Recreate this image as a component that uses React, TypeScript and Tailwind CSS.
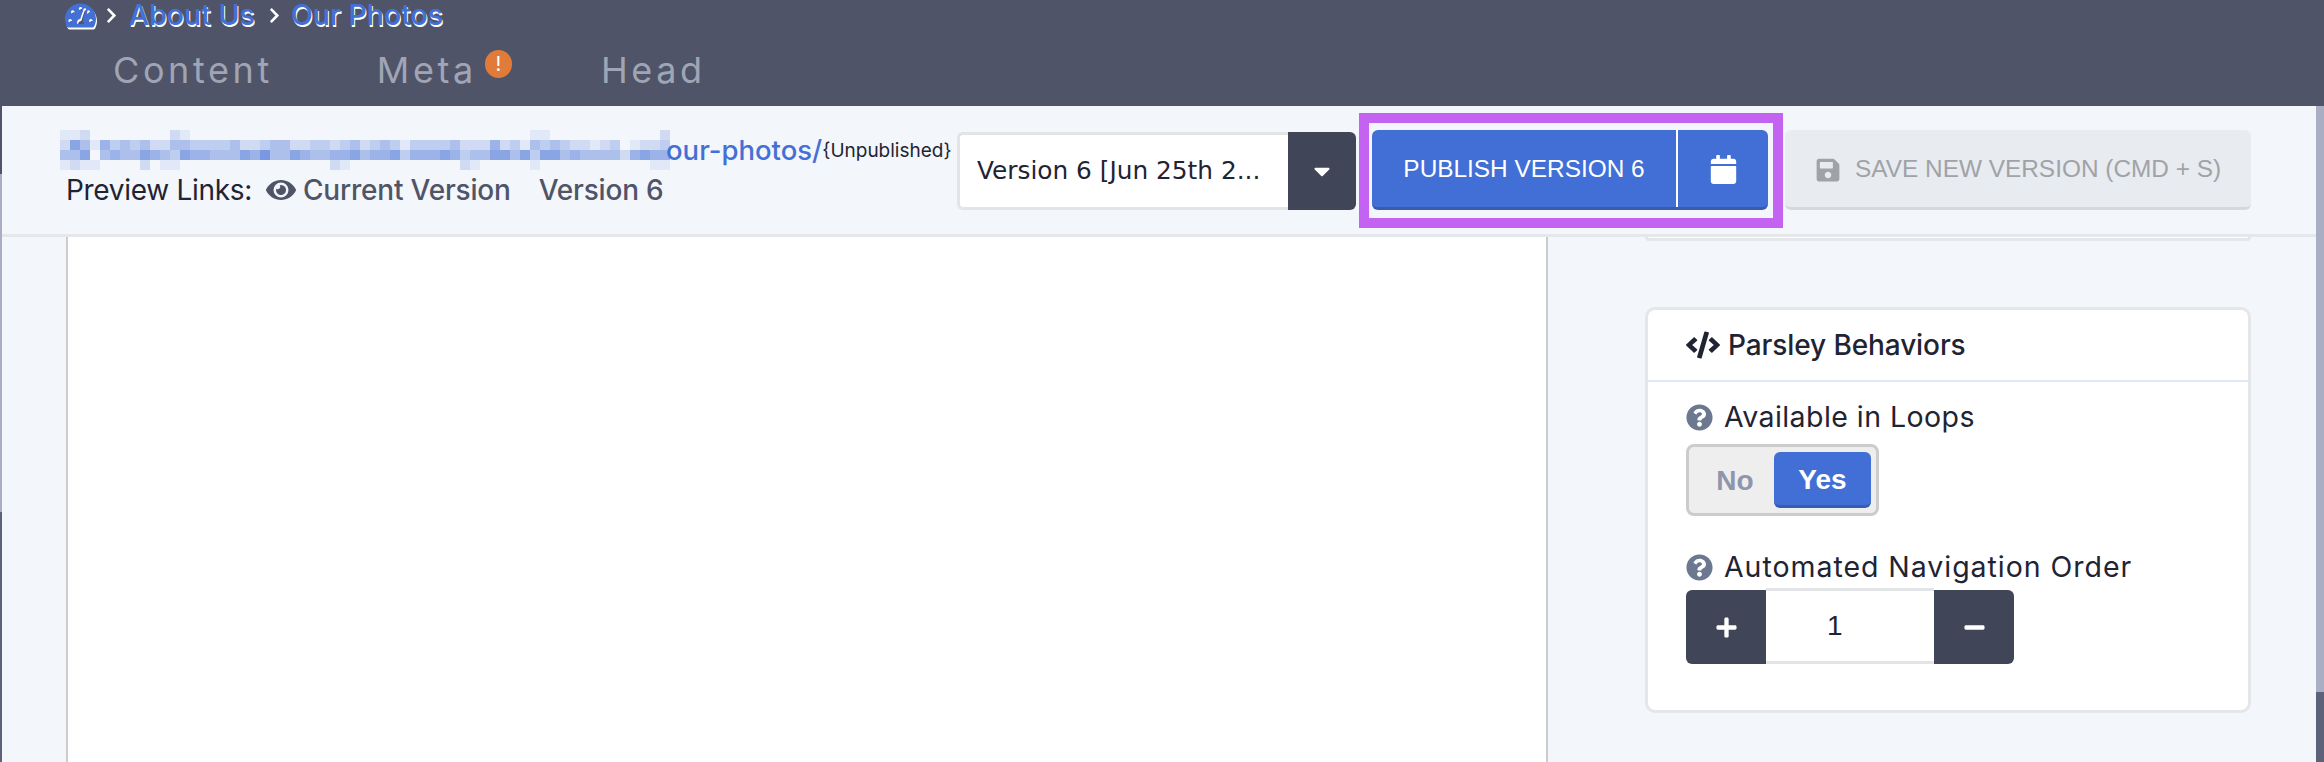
import { FaCalendar, FaCaretDown, FaChevronRight, FaCode, FaEye, FaMinus, FaPlus, FaQuestionCircle, FaSave, FaTachometerAlt } from "react-icons/fa";

// blurred part of the url, one digit per 10px block (digit = opacity * 10)
const blurRows = [
  "11200000000210000000000000000000" + "000000000000000110000000000020",
  "26415343422443333422344223323423" + "431333342225231434322123012231",
  "44604544654365544465744654455645" + "563555653446646366454444256553",
  "12110000201100000000000000021000" + "000000002100000100000000000110",
];

function BlurredUrl() {
  return (
    <svg width="610" height="40" className="shrink-0" aria-hidden="true">
      {blurRows.map((row, y) =>
        row.split("").map((level, x) =>
          level === "0" ? null : (
            <rect
              key={`${x}-${y}`}
              x={x * 10}
              y={y * 10}
              width="10"
              height="10"
              fill="#4470d6"
              opacity={Number(level) / 10}
            />
          ),
        ),
      )}
    </svg>
  );
}

function HelpLabel({ children, className }: { children: string; className: string }) {
  return (
    <div className={`flex h-[27px] items-center text-[28.5px] text-[#1f2433] ${className}`}>
      <FaQuestionCircle className="mr-[11px] text-[27px] text-[#6b7890]" />
      {children}
    </div>
  );
}

export default function App() {
  return (
    <div className="flex h-[762px] w-full flex-col overflow-hidden bg-[#f3f6fb] font-['Inter',sans-serif]">
      <header className="h-[106px] shrink-0 bg-[#4f5468]">
        <div className="flex h-[30px] items-center pl-[65px] text-[28.5px] font-medium leading-[30px] text-[#4470d6] [text-shadow:1px_2px_0_#fff]">
          <FaTachometerAlt className="text-[31px] text-[#4470d6] [filter:drop-shadow(1px_2px_0_#fff)]" />
          <FaChevronRight className="ml-[7px] text-[17px] text-white" />
          <span className="ml-[9px]">About Us</span>
          <FaChevronRight className="ml-[11px] text-[17px] text-white" />
          <span className="ml-[8px]">Our Photos</span>
        </div>
        <nav className="flex pl-[113px] pt-[20px] text-[36px] leading-[40px] tracking-[3.6px] text-[#a0a5b5]">
          <span>Content</span>
          <span className="relative ml-[104px]">
            Meta
            <span className="absolute left-[108px] top-0 flex h-[28px] w-[27px] items-center justify-center rounded-full bg-[#e07b39] text-[20px] leading-none tracking-normal text-white">
              !
            </span>
          </span>
          <span className="ml-[124px]">Head</span>
        </nav>
      </header>

      <div className="flex min-h-0 flex-1">
        <div className="flex w-[2px] shrink-0 flex-col">
          <div className="h-[68px] bg-[#4f5468]" />
          <div className="h-[338px] bg-[#a9aec4]" />
          <div className="flex-1 bg-[#5c6279]" />
        </div>

        <main className="flex min-w-0 flex-1 flex-col">
          <div className="flex h-[131px] shrink-0 items-start border-b-[3px] border-[#e5e7eb] pl-[64px]">
            <div className="w-[891px] shrink-0">
              <div className="ml-[-6px] mt-[24px] flex h-[40px] items-start">
                <BlurredUrl />
                <a className="ml-[-4px] mt-[5px] text-[27.5px] font-medium leading-[30px] text-[#4470d6]">our-photos/</a>
                <span className="mt-[9px] text-[19px] leading-[24px] text-[#1f2433]">{"{Unpublished}"}</span>
              </div>
              <div className="mt-[2px] flex items-center text-[28px] leading-[36px] text-[#1f2433]">
                <span className="tracking-[-0.3px]">Preview Links:</span>
                <FaEye className="ml-[14px] text-[30px] text-[#4f5468]" />
                <span className="ml-[7px] font-medium tracking-[-0.2px] text-[#4f5468]">Current Version</span>
                <span className="ml-[28px] font-medium tracking-[-0.2px] text-[#4f5468]">Version 6</span>
              </div>
            </div>

            <div className="mt-[26px] flex h-[78px] w-[399px] shrink-0">
              <div className="flex w-[331px] items-center rounded-l-[6px] border-[3px] border-r-0 border-[#e2e4e6] bg-white pl-[17px] font-['DejaVu_Sans',sans-serif] text-[24.8px] text-[#1f2433]">
                Version 6 [Jun 25th 2...
              </div>
              <div className="flex flex-1 items-center justify-center rounded-r-[6px] bg-[#414558] text-white">
                <FaCaretDown className="text-[26px]" />
              </div>
            </div>

            <div className="ml-[3px] mt-[7px] h-[115px] w-[424px] shrink-0 border-[10px] border-[#c462f2] pl-[3px] pt-[7px]">
              <div className="flex h-[80px] w-[396px] overflow-hidden rounded-[6px] border-b-[3px] border-[#3a5cae] bg-[#416fd6] font-['Liberation_Sans',sans-serif] text-white">
                <div className="flex w-[304px] items-center justify-center pt-[2px] text-[24.4px]">PUBLISH VERSION 6</div>
                <div className="w-[2px] bg-white" />
                <div className="flex flex-1 items-center justify-center pt-[1px]">
                  <FaCalendar className="text-[29px]" />
                </div>
              </div>
            </div>

            <div className="ml-[2px] mt-[24px] flex h-[80px] w-[466px] shrink-0 items-center rounded-[6px] border-b-[3px] border-[#d5d8dd] bg-[#e8ebf0] pl-[30px] pt-[2px] font-['Liberation_Sans',sans-serif] text-[24.4px] text-[#9fa3a8]">
              <FaSave className="text-[26px]" />
              <span className="ml-[14px]">SAVE NEW VERSION (CMD + S)</span>
            </div>
          </div>

          <div className="flex min-h-0 flex-1">
            <div className="ml-[64px] w-[1482px] shrink-0 border-x-2 border-[#cccccc] bg-white" />
            <aside className="ml-[97px] w-[606px] shrink-0">
              <div className="h-[4px] rounded-b-[8px] border-x-[3px] border-b-[3px] border-[#e4e6e9] bg-white" />
              <section className="mt-[66px] h-[406px] rounded-[10px] border-[3px] border-[#e4e6e9] bg-white">
                <div className="flex h-[72px] items-center border-b-2 border-[#dfe8f8] pl-[38px] text-[28px] font-medium tracking-[-0.1px] text-[#1f2433]">
                  <FaCode className="mr-[8px] text-[34px]" />
                  Parsley Behaviors
                </div>
                <div className="pl-[38px] pt-[22px]">
                  <HelpLabel className="tracking-[0.44px]">Available in Loops</HelpLabel>
                  <div className="mt-[13px] flex h-[72px] w-[193px] rounded-[8px] border-[3px] border-[#cccccc] bg-[#eeeeee] font-['Liberation_Sans',sans-serif] text-[28px] font-bold">
                    <div className="flex w-[85px] items-center justify-center pl-[7px] pt-[2px] text-[#8d96ab]">No</div>
                    <div className="mt-[5px] flex h-[56px] w-[97px] items-center justify-center rounded-[6px] border-b-[3px] border-[#3a5cae] bg-[#416fd6] pt-[2px] text-white">
                      Yes
                    </div>
                  </div>
                  <div className="mt-[38px]">
                    <HelpLabel className="tracking-[0.96px]">Automated Navigation Order</HelpLabel>
                  </div>
                  <div className="mt-[7px] flex w-[328px]">
                    <div className="mt-[2px] flex h-[74px] w-[80px] items-center justify-center rounded-l-[6px] bg-[#414558] text-white">
                      <FaPlus className="text-[23px]" />
                    </div>
                    <div className="flex h-[76px] w-[168px] items-center border-y-[3px] border-[#e2e4e6] pl-[61px] font-['Liberation_Sans',sans-serif] text-[28px] text-[#1f2433]">
                      1
                    </div>
                    <div className="mt-[2px] flex h-[74px] w-[80px] items-center justify-center rounded-r-[6px] bg-[#414558] text-white">
                      <FaMinus className="text-[23px]" />
                    </div>
                  </div>
                </div>
              </section>
            </aside>
          </div>
        </main>

        <div className="flex w-[8px] shrink-0 flex-col">
          <div className="h-[586px] bg-[#a9aec4]" />
          <div className="flex-1 bg-[#5c6279]" />
        </div>
      </div>
    </div>
  );
}
